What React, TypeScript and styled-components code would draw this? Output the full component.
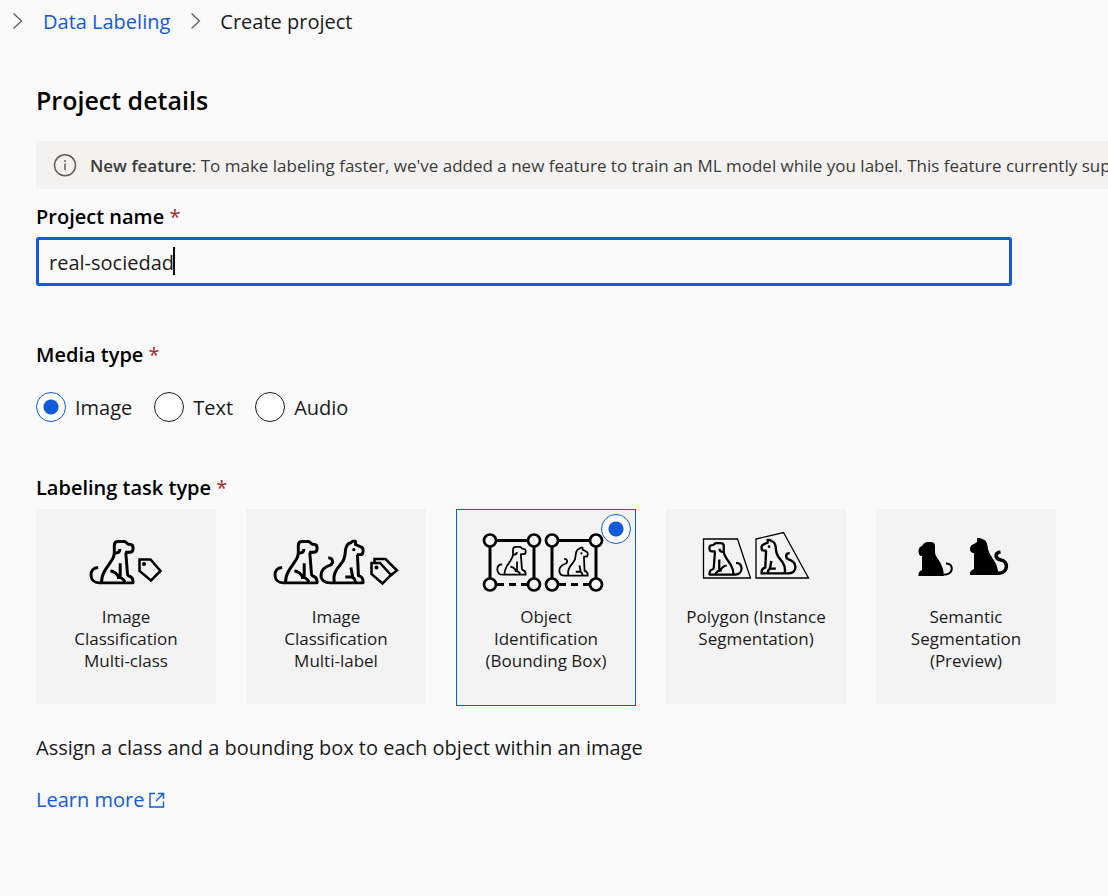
import React, { useState } from "react";
import styled, { createGlobalStyle } from "styled-components";

const blue = "#115bd9";

const GlobalStyle = createGlobalStyle`
  * { box-sizing: border-box; }
  body {
    margin: 0;
    background: #fafafa;
    color: #1b1b1b;
    font-family: "Segoe UI", "Open Sans", "Noto Sans", sans-serif;
    font-size: 20px;
    line-height: 28px;
    overflow-x: hidden;
  }
`;

const Breadcrumb = styled.nav`
  display: flex;
  align-items: center;
  padding: 8px 12px 0;
`;

const Crumb = styled.span`
  color: #1b1b1b;
`;

const CrumbLink = styled.a`
  color: ${blue};
  text-decoration: none;
`;

const Separator = styled.svg<{ $spaced?: boolean }>`
  width: 12px;
  height: 18px;
  margin: 0 ${(p) => (p.$spaced ? 18 : 19)}px 2px ${(p) => (p.$spaced ? 20 : 0)}px;
  fill: none;
  stroke: #605e5c;
`;

const Main = styled.main`
  padding: 46px 0 48px 36px;
`;

const Title = styled.h1`
  margin: 0 0 23px;
  color: #000;
  font-size: 25px;
  font-weight: 600;
  line-height: 36px;
`;

const Banner = styled.div`
  display: flex;
  align-items: center;
  gap: 13px;
  height: 48px;
  margin-bottom: 14px;
  padding: 1px 0 0 17px;
  overflow: hidden;
  background: #f3f2f1;
  color: #3b3a39;
  font-size: 17px;
  white-space: nowrap;

  svg {
    flex: none;
  }

  strong {
    font-weight: 600;
  }
`;

const Field = styled.div`
  margin-bottom: 55px;
`;

const Label = styled.label`
  display: block;
  color: #000;
  font-weight: 600;
`;

const Group = styled.fieldset`
  min-width: 0;
  margin: 0;
  padding: 0;
  border: 0;
`;

const Legend = styled.legend`
  padding: 0;
  color: #000;
  font-weight: 600;
`;

const Star = styled.span`
  color: #a4262c;
  font-weight: 400;
`;

const InputWrap = styled.div`
  position: relative;
  max-width: 976px;
  margin: 6px 96px 0 0;
`;

const NameInput = styled.input`
  display: block;
  width: 100%;
  height: 49px;
  padding: 2px 10px 0;
  border: 3px solid ${blue};
  border-radius: 3px;
  outline: none;
  background: #fafafa;
  color: #1b1b1b;
  font: inherit;
  caret-color: transparent;
`;

const Caret = styled.span`
  position: absolute;
  top: 10px;
  left: 137px;
  width: 2px;
  height: 28px;
  background: #000;
`;

const Radios = styled.div`
  display: flex;
  gap: 22px;
  margin: 23px 0 52px;
`;

const RadioLabel = styled.label`
  display: flex;
  align-items: center;
  gap: 9px;
  height: 30px;
`;

const RadioText = styled.span`
  padding-top: 2px;
`;

const Radio = styled.input`
  appearance: none;
  flex: none;
  width: 30px;
  height: 30px;
  margin: 0;
  border: 1px solid #1b1b1b;
  border-radius: 50%;
  background: #fff;

  &:checked {
    border-color: ${blue};
    background: radial-gradient(circle, ${blue} 7px, #fff 8px);
  }
`;

const Cards = styled.div`
  display: flex;
  flex-wrap: wrap;
  align-items: flex-start;
  gap: 30px;
  min-height: 197px;
  margin-top: 7px;
`;

const Card = styled.label<{ $selected: boolean }>`
  position: relative;
  display: flex;
  flex-direction: column;
  align-items: center;
  width: 180px;
  min-height: ${(p) => (p.$selected ? 197 : 195)}px;
  padding: 20px 18px;
  background: #f3f3f3;
  box-shadow: ${(p) => (p.$selected ? `inset 0 0 0 1px ${blue}` : "none")};
  font-size: 17px;
  line-height: 22px;
  text-align: center;
`;

const CardRadio = styled(Radio)`
  position: absolute;
  top: 5px;
  right: 5px;
  opacity: ${(p) => (p.checked ? 1 : 0)};
`;

const Art = styled.svg`
  flex: none;
  width: 130px;
  height: 66px;
  margin-bottom: 11px;
  fill: none;
  stroke: #000;
`;

const Description = styled.p`
  margin: 28px 0 24px;
`;

const LearnMore = styled.a`
  display: inline-flex;
  align-items: center;
  gap: 5px;
  color: ${blue};
  text-decoration: none;
`;

const Chevron = ({ spaced }: { spaced?: boolean }) => (
  <Separator $spaced={spaced} viewBox="0 0 12 18" aria-hidden="true">
    <path d="M1.5 1.5 9.5 9 1.5 16.5" strokeWidth="1.3" />
  </Separator>
);

type Pet = { x: number; y: number; size: number; flip?: boolean; weight?: number };

const place = ({ x, y, size, flip }: Pet) =>
  flip
    ? `translate(${x + size} ${y}) scale(${-size / 140} ${size / 140})`
    : `translate(${x} ${y}) scale(${size / 140})`;

const Dog = (p: Pet) => (
  <g transform={place(p)} strokeWidth={p.weight ?? 9} strokeLinejoin="round">
    <path d="M28 85C13 85 6 96 6 108C6 123 17 132 31 132H134V128C134 118 129 113 121 111Q117 110 117 104L112 40" />
    <path d="M38 132C38 117 42 105 49 93L66 68C73 58 77 50 77 40V18Q77 6 89 6H107Q113 6 115 11Q118 15 126 15Q134 16 134 24V29Q134 39 124 39H110" />
    <path d="M77 41H83Q94 41 94 29M95 72V118M65 96Q81 97 91 116H85M91 116Q105 116 110 132" />
  </g>
);

const Cat = (p: Pet) => (
  <g transform={place(p)} strokeWidth={p.weight ?? 9} strokeLinejoin="round">
    <path d="M28 56C43 55 45 73 34 78C15 84 6 94 6 109C6 123 17 132 34 132H134V128C134 117 129 112 120 110L117 46" />
    <path d="M47 132C43 116 47 102 54 91L70 70C80 58 79 46 81 30C83 17 91 11 98 9L103 5H111V15L126 22Q134 25 134 31V37Q134 46 125 46H115" />
    <path d="M97 85 103 116Q110 118 111 132M80 114H103" />
    <circle cx="106" cy="31" r="5" fill="#000" stroke="none" />
  </g>
);

const BoundingFrame = ({ x }: { x: number }) => (
  <g transform={`translate(${x} 0)`} strokeWidth="3">
    <path d="M7 18V50M51 18V50M14 11.5H44" />
    <path d="M14 55.5H44" strokeDasharray="7 5" />
    {[7, 51].map((cx) =>
      [11.5, 55.5].map((cy) => <circle key={`${cx}-${cy}`} cx={cx} cy={cy} r="6" fill="#f8f8f8" strokeWidth="2.7" />)
    )}
  </g>
);

const MultiClassArt = () => (
  <Art viewBox="0 0 130 66" aria-hidden="true">
    <Dog x={28} y={10.5} size={46} />
    <path d="M78.5 30.5H89.5L99.5 42 90 51.5 78.5 42Z" strokeWidth="2.5" />
    <circle cx="83" cy="35" r="2" fill="#000" stroke="none" />
  </Art>
);

const MultiLabelArt = () => (
  <Art viewBox="0 0 130 66" aria-hidden="true">
    <Dog x={2} y={10.5} size={46} />
    <Cat x={48} y={10.5} size={46} />
    <path d="M100.5 34H109L120 46 111.5 54.5 100.5 45Z" strokeWidth="2.5" />
    <path d="M103.5 34V30H114.5L126 41.5 119.5 46.5" strokeWidth="2.5" />
    <circle cx="105.5" cy="38.5" r="2" fill="#000" stroke="none" />
  </Art>
);

const BoundingBoxArt = () => (
  <Art viewBox="0 0 130 66" aria-hidden="true">
    <BoundingFrame x={2} />
    <BoundingFrame x={64} />
    <Dog x={15} y={16.5} size={31} weight={8} />
    <Cat x={77} y={17.5} size={31} weight={8} />
  </Art>
);

const PolygonArt = () => (
  <Art viewBox="0 0 130 66" aria-hidden="true">
    <path d="M12.5 10H46.5L59.5 49H12.5Z" strokeWidth="1.3" />
    <path d="M65 10 92.5 3.5 117.5 49H65Z" strokeWidth="1.3" />
    <Dog x={17} y={12.5} size={35} flip />
    <Cat x={69} y={9.5} size={37} flip />
  </Art>
);

const SegmentationArt = () => (
  <Art viewBox="0 0 130 66" aria-hidden="true">
    <g fill="#000" stroke="none">
      <path d="M17.5 47V45C17.5 43 19 42 21 41V27C18.5 27 17.5 25 17.5 22Q17.5 18 21 17C23 14 24 13 27 13H30Q34 13 34 17V23C34 29 42.5 33 43 47Z" />
      <path d="M69 46V44C69 42 71 41 73 40V24C70 24 69 22 69 20Q69 16 73 15L76 13V9H79L81 10Q86 11 86.5 17C87.5 28 96 31 97 42V46Z" />
    </g>
    <path d="M43 45.5H45C52.5 44 53 34.5 45 34.5" strokeWidth="2" />
    <path d="M95 44.3H98C108 43 107 32 100 31C94 30 93 24 99.5 23" strokeWidth="3.5" />
  </Art>
);

const tasks = [
  { id: "multi-class", lines: ["Image", "Classification", "Multi-class"], Picture: MultiClassArt },
  { id: "multi-label", lines: ["Image", "Classification", "Multi-label"], Picture: MultiLabelArt },
  { id: "bounding-box", lines: ["Object", "Identification", "(Bounding Box)"], Picture: BoundingBoxArt },
  { id: "polygon", lines: ["Polygon (Instance", "Segmentation)"], Picture: PolygonArt },
  { id: "semantic", lines: ["Semantic", "Segmentation", "(Preview)"], Picture: SegmentationArt },
];

const CardLine = styled.span`
  white-space: nowrap;
`;

export default function App() {
  const [name, setName] = useState("real-sociedad");
  const [media, setMedia] = useState("Image");
  const [task, setTask] = useState("bounding-box");

  return (
    <>
      <GlobalStyle />
      <Breadcrumb aria-label="Breadcrumb">
        <Chevron />
        <CrumbLink href="#data-labeling">Data Labeling</CrumbLink>
        <Chevron spaced />
        <Crumb aria-current="page">Create project</Crumb>
      </Breadcrumb>
      <Main>
        <Title>Project details</Title>
        <Banner role="status">
          <svg width="24" height="24" viewBox="0 0 24 24" fill="none" stroke="#605e5c" strokeWidth="1.5" aria-hidden="true">
            <circle cx="12" cy="11.3" r="10.5" />
            <path d="M12 9.5V16M12 6V8" />
          </svg>
          <span>
            <strong>New feature</strong>: To make labeling faster, we've added a new feature to train an ML model while you label. This feature currently supports
          </span>
        </Banner>
        <Field>
          <Label htmlFor="project-name">
            Project name <Star>*</Star>
          </Label>
          <InputWrap>
            <NameInput id="project-name" type="text" value={name} onChange={(e) => setName(e.target.value)} />
            <Caret />
          </InputWrap>
        </Field>
        <Group>
          <Legend>
            Media type <Star>*</Star>
          </Legend>
          <Radios>
            {["Image", "Text", "Audio"].map((m) => (
              <RadioLabel key={m}>
                <Radio type="radio" name="media" checked={media === m} onChange={() => setMedia(m)} />
                <RadioText>{m}</RadioText>
              </RadioLabel>
            ))}
          </Radios>
        </Group>
        <Group>
          <Legend>
            Labeling task type <Star>*</Star>
          </Legend>
          <Cards>
            {tasks.map(({ id, lines, Picture }) => (
              <Card key={id} $selected={task === id}>
                <CardRadio type="radio" name="task" checked={task === id} onChange={() => setTask(id)} />
                <Picture />
                {lines.map((line) => (
                  <CardLine key={line}>{line}</CardLine>
                ))}
              </Card>
            ))}
          </Cards>
        </Group>
        <Description>Assign a class and a bounding box to each object within an image</Description>
        <LearnMore href="#learn-more">
          Learn more
          <svg width="16" height="16" viewBox="0 0 16 16" fill="none" stroke="currentColor" strokeWidth="1.4" aria-hidden="true">
            <path d="M6 1.5H1V15H14.5V9.5M9 1.5H14.5V7M14.5 1.5 7 9" />
          </svg>
        </LearnMore>
      </Main>
    </>
  );
}
